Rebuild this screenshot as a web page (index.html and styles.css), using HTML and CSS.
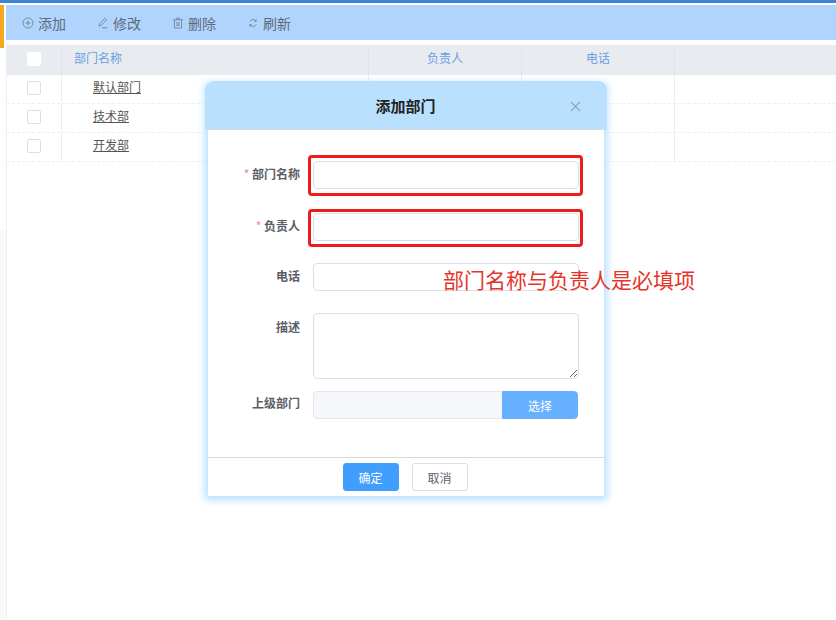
FILE: index.html
```html
<!DOCTYPE html>
<html lang="zh-CN">
<head>
<meta charset="utf-8">
<title>部门管理</title>
<link rel="stylesheet" href="styles.css">
</head>
<body>
<div class="topline"></div>
<div class="page">
  <div class="rail"><div class="rail-mark"></div><div class="rail-lower"></div></div>
  <main class="content">
    <div class="toolbar">
      <span class="tool tool-add"><svg class="icon" viewBox="0 0 12 12"><circle cx="6" cy="6" r="5"/><path d="M3.5 6h5M6 3.5v5"/></svg>添加</span>
      <span class="tool tool-edit"><svg class="icon" viewBox="0 0 12 12"><path d="M8 1.2l1.6 1.6-5.4 5.6-2.2.6.5-2.2zM5 10.8h5.5"/></svg>修改</span>
      <span class="tool tool-del"><svg class="icon" viewBox="0 0 12 12"><path d="M1.2 2.8h9.6M4.5 2.6V1.2h3v1.4M2.4 2.8v8.2h7.2V2.8M5 5v3.5h2V5"/></svg>删除</span>
      <span class="tool"><svg class="icon" viewBox="0 0 12 12"><path d="M2.8 4.6A3.5 3.5 0 0 1 8.9 4M9.2 7.4A3.5 3.5 0 0 1 3.1 8M9.2 2.4v2H7.2M2.8 9.6v-2h2"/></svg>刷新</span>
    </div>
    <div class="row head">
      <div class="cell c-check"><span class="check check-head"></span></div>
      <div class="cell c-name">部门名称</div>
      <div class="cell c-mid">负责人</div>
      <div class="cell c-mid">电话</div>
      <div class="cell c-rest"></div>
    </div>
    <div class="row">
      <div class="cell c-check"><span class="check"></span></div>
      <div class="cell c-name c-link"><u>默认部门</u></div>
      <div class="cell c-mid"></div><div class="cell c-mid"></div><div class="cell c-rest"></div>
    </div>
    <div class="row">
      <div class="cell c-check"><span class="check"></span></div>
      <div class="cell c-name c-link"><u>技术部</u></div>
      <div class="cell c-mid"></div><div class="cell c-mid"></div><div class="cell c-rest"></div>
    </div>
    <div class="row">
      <div class="cell c-check"><span class="check"></span></div>
      <div class="cell c-name c-link"><u>开发部</u></div>
      <div class="cell c-mid"></div><div class="cell c-mid"></div><div class="cell c-rest"></div>
    </div>
  </main>
</div>

<section class="modal">
  <header class="modal-head">
    <h2 class="modal-title">添加部门</h2>
    <svg class="modal-close" viewBox="0 0 12 12"><path d="M1 1l10 10M11 1L1 11"/></svg>
  </header>
  <form class="modal-body">
    <div class="field f-name"><label class="label"><i>*</i> 部门名称</label><input class="input" type="text"></div>
    <div class="field f-owner"><label class="label"><i>*</i> 负责人</label><input class="input" type="text"></div>
    <div class="field f-phone"><label class="label">电话</label><input class="input" type="text"></div>
    <div class="field f-desc"><label class="label">描述</label><textarea class="input area"></textarea></div>
    <div class="field f-parent"><label class="label">上级部门</label>
      <div class="group"><input class="group-input" type="text" disabled><button class="group-btn" type="button">选择</button></div>
    </div>
  </form>
  <footer class="modal-foot">
    <button class="btn btn-primary" type="button">确定</button>
    <button class="btn" type="button">取消</button>
  </footer>
</section>

<div class="mark mark-one"></div>
<div class="mark mark-two"></div>
<div class="note">部门名称与负责人是必填项</div>
</body>
</html>
```
FILE: styles.css
```css
* { box-sizing: border-box; }
html, body { margin: 0; height: 100%; }
body {
  background: #fff;
  font-family: "Noto Sans CJK SC", "Liberation Sans", sans-serif;
  font-size: 12px;
  overflow: hidden;
  position: relative;
}
.topline { height: 3px; background: #3a83d6; margin-bottom: 2px; }
.page { display: flex; height: 615px; }
.rail { width: 6px; flex: none; display: flex; flex-direction: column; }
.rail-mark { width: 4px; height: 43px; background: #f5a623; }
.rail-lower { flex: 1; margin-top: 182px; background: #fafafa; }
.content { flex: 1; border-left: 1px solid #f0f0f0; min-width: 0; }

.toolbar {
  display: flex;
  align-items: center;
  height: 35px;
  margin: 0 0 5px -1px;
  padding-left: 16px;
  background: #b0d4fd;
  color: #5d6b7b;
  font-size: 14px;
}
.tool { display: flex; align-items: center; line-height: 20px; }
.tool-add { margin-right: 31px; }
.tool-edit { margin-right: 31px; }
.tool-del { margin-right: 31px; }
.icon {
  width: 12px;
  height: 12px;
  margin-right: 4px;
  fill: none;
  stroke: #6c7885;
  stroke-width: 0.8;
}

.row { display: flex; height: 29px; border-bottom: 1px dashed #eeeeee; }
.head { height: 30px; background: #e8ebf0; border-bottom: 0; color: #6a9fe0; }
.cell { display: flex; align-items: center; height: 100%; border-right: 1px solid #ececec; }
.head .cell { border-right-color: #e1e4ea; }
.c-check { width: 55px; justify-content: center; }
.c-name { width: 307px; padding: 0 0 5px 12px; }
.c-link { padding-left: 31px; color: #555; }
.c-mid { width: 153px; justify-content: center; padding-bottom: 5px; }
.c-rest { flex: 1; border-right: 0; }
.check {
  width: 14px;
  height: 14px;
  margin-bottom: 2px;
  background: #fff;
  border: 1px solid #dcdfe6;
  border-radius: 2px;
}
.check-head { border-color: #fff; }

.modal {
  position: absolute;
  left: 208px;
  top: 85px;
  width: 396px;
  height: 411px;
  display: flex;
  flex-direction: column;
  background: #fff;
  box-shadow: 0 1px 8px 3px #b4defe;
}
.modal-head {
  display: flex;
  align-items: center;
  justify-content: center;
  position: relative;
  height: 49px;
  flex: none;
  margin: -4px -3px 0;
  padding-right: 1px;
  background: #b9e1fd;
  border-radius: 9px 9px 0 0;
  border-bottom: 1px solid #d5dde4;
}
.modal-title { margin: 0; font-size: 15px; font-weight: 700; color: #222; line-height: 49px; }
.modal-close {
  position: absolute;
  left: 365px;
  top: 20px;
  width: 11px;
  height: 11px;
  fill: none;
  stroke: #8898a6;
  stroke-width: 1.1;
}
.modal-body {
  flex: 1;
  display: flex;
  flex-direction: column;
  padding-top: 31px;
}
.field { display: flex; margin-bottom: 22px; }
.f-name { margin-bottom: 24px; }
.f-desc { margin-bottom: 12px; }
.label {
  width: 92px;
  margin-right: 13px;
  text-align: right;
  line-height: 26px;
  font-weight: 700;
  color: #5a5e66;
  font-size: 12px;
}
.f-owner .label { line-height: 25px; }
.f-desc .label { line-height: 28px; }
.f-parent .label { line-height: 24px; }
.label i { font-style: normal; font-weight: 400; color: #e58a8a; }
.input {
  display: block;
  width: 266px;
  height: 28px;
  padding: 0 8px;
  background: #fff;
  border: 1px solid #dcdfe6;
  border-radius: 4px;
  outline: 0;
}
.area { height: 66px; resize: vertical; font: inherit; }
.group { display: flex; width: 265px; height: 28px; }
.group-input {
  width: 189px;
  height: 100%;
  background: #f5f7fa;
  border: 1px solid #e4e7ed;
  border-right: 0;
  border-radius: 4px 0 0 4px;
}
.group-btn {
  width: 76px;
  height: 100%;
  padding: 0;
  background: #66b1ff;
  border: 1px solid #66b1ff;
  border-radius: 0 4px 4px 0;
  color: #fff;
  font: inherit;
}
.modal-foot {
  display: flex;
  justify-content: center;
  gap: 13px;
  height: 39px;
  flex: none;
  padding: 5px 2px 0 0;
  border-top: 1px solid #d9d9d9;
}
.btn {
  width: 56px;
  height: 28px;
  padding: 0;
  background: #fff;
  border: 1px solid #dcdfe6;
  border-radius: 3px;
  color: #606266;
  font: inherit;
}
.btn-primary { background: #409eff; border-color: #409eff; color: #fff; }

.mark {
  position: absolute;
  left: 308px;
  width: 275px;
  border: 3px solid #ee1c1c;
  border-radius: 4px;
}
.mark-one { top: 155px; height: 41px; }
.mark-two { top: 209px; height: 38px; }
.note {
  position: absolute;
  left: 443px;
  top: 264px;
  font-size: 21px;
  line-height: 30px;
  color: #e5352b;
  white-space: nowrap;
}
```
